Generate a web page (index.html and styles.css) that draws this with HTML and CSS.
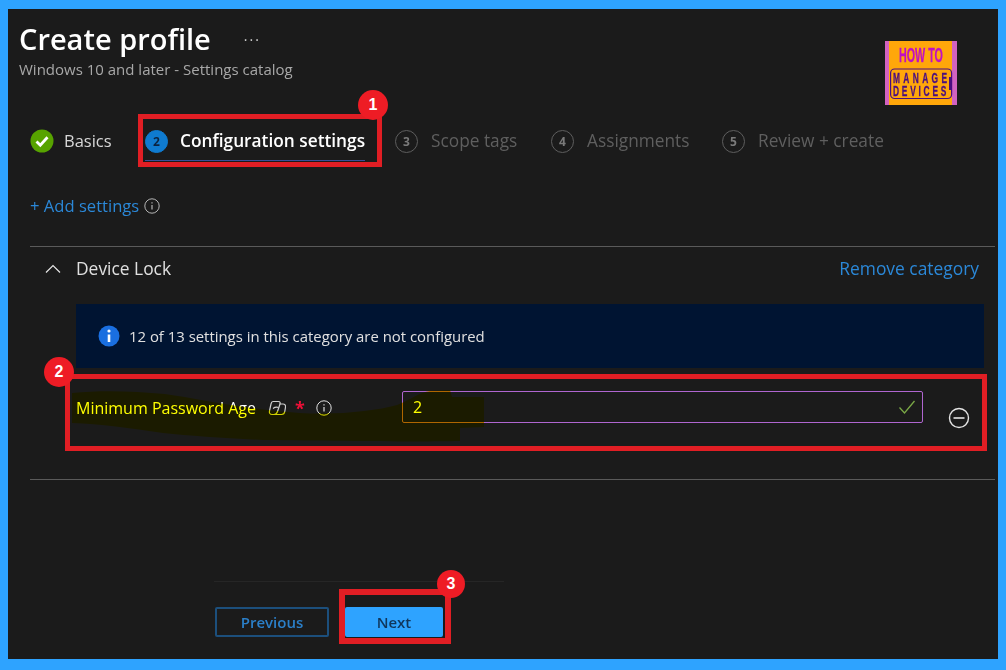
FILE: index.html
```html
<!DOCTYPE html>
<html lang="en">
<head>
<meta charset="utf-8">
<title>Create profile</title>
<link rel="stylesheet" href="styles.css">
</head>
<body>
<div class="frame">
  <header class="header">
    <div class="heading">
      <div class="title-row"><h1 class="title">Create profile</h1><span class="more">···</span></div>
      <div class="subtitle">Windows 10 and later - Settings catalog</div>
    </div>
    <svg class="logo" viewBox="0 0 72 64" width="72" height="64">
      <rect width="72" height="64" fill="#ffa70a"/>
      <rect width="4" height="64" fill="#d262c0"/>
      <rect x="67" width="5" height="64" fill="#d262c0"/>
      <text transform="translate(14 21) scale(.55 1)" class="logo-how">HOW TO</text>
      <rect x="5.600" y="28" width="61" height="29.500" rx="4" fill="none" stroke="#4a0f80" stroke-width="1.200"/>
      <text transform="translate(8 42) scale(.6 1)" class="logo-md logo-manage">MANAGE</text>
      <text transform="translate(8 55) scale(.6 1)" class="logo-md logo-devices">DEVICES</text>
      <rect x="64" y="36" width="2.500" height="13" fill="#4a0f80"/>
    </svg>
  </header>

  <nav class="tabs">
    <div class="tab tab-basics">
      <svg class="step-icon" viewBox="0 0 24 24" width="24" height="24"><circle cx="12" cy="12" r="11.500" fill="#57a300"/><path d="M6.500 12.500l3.800 3.800 7.200-8" fill="none" stroke="#fff" stroke-width="2.800"/></svg>
      <span class="tab-label">Basics</span>
    </div>
    <div class="tab tab-current">
      <span class="step step-active">2</span>
      <span class="tab-label tab-label-active">Configuration settings</span>
    </div>
    <div class="tab tab-scope">
      <span class="step">3</span>
      <span class="tab-label tab-label-off">Scope tags</span>
    </div>
    <div class="tab tab-assign">
      <span class="step">4</span>
      <span class="tab-label tab-label-off">Assignments</span>
    </div>
    <div class="tab">
      <span class="step">5</span>
      <span class="tab-label tab-label-off">Review + create</span>
    </div>
  </nav>

  <div class="add-row">
    <a class="link link-add">+ Add settings</a>
    <svg class="info" viewBox="0 0 16 16" width="16" height="16"><circle cx="8" cy="8" r="7.200" fill="none" stroke="currentColor"/><path d="M8 7v4.600M8 4.200v1.400" stroke="currentColor" stroke-width="1.200"/></svg>
  </div>

  <section class="section">
    <div class="cat-row">
      <div class="cat-left">
        <svg class="chevron" viewBox="0 0 16 16" width="16" height="16"><path d="M1 11.500l7-7 7 7" fill="none" stroke="#e6e6e6" stroke-width="1.200"/></svg>
        <span class="cat-name">Device Lock</span>
      </div>
      <a class="link">Remove category</a>
    </div>
    <div class="banner">
      <svg class="banner-icon" viewBox="0 0 22 22" width="22" height="22"><circle cx="11" cy="11" r="10.500" fill="#1a6fe0"/><path d="M11 9.500v7.500" stroke="#fff" stroke-width="2.600"/><circle cx="11" cy="6" r="1.600" fill="#fff"/></svg>
      <span>12 of 13 settings in this category are not configured</span>
    </div>
    <div class="field-row">
      <div class="field-label">
        <span class="label-text">Minimum Password Age</span>
        <svg class="copilot" viewBox="0 0 18 18" width="18" height="18"><path d="M5 2.500h5.500c1.500 0 2 1 1.500 2.500L9.500 12.500c-.5 1.500-1.500 3-3.500 3H4c-2 0-3-1.500-2.500-3.500L3 5c.3-1.500 1-2.500 2-2.500z" fill="none" stroke="#cfcfcf" stroke-width="1.200"/><path d="M11.500 5H15c1.800 0 2.800 1.500 2.500 3.200l-.7 4.300c-.3 2-1.500 3-3.300 3H6" fill="none" stroke="#cfcfcf" stroke-width="1.200"/><path d="M5 9.500c2-1.500 4-1.500 5.500-1" fill="none" stroke="#cfcfcf" stroke-width="1.200"/></svg>
        <span class="req">*</span>
        <svg class="info info-label" viewBox="0 0 16 16" width="16" height="16"><circle cx="8" cy="8" r="7.200" fill="none" stroke="currentColor"/><path d="M8 7v4.600M8 4.200v1.400" stroke="currentColor" stroke-width="1.200"/></svg>
      </div>
      <div class="input">
        <span class="input-value">2</span>
        <svg class="input-check" viewBox="0 0 18 16" width="18" height="16"><path d="M1.500 8.500l5 5.500L16.500 2" fill="none" stroke="#7aa846" stroke-width="1.300"/></svg>
      </div>
      <svg class="minus" viewBox="0 0 22 22" width="22" height="22"><circle cx="11" cy="11" r="9.500" fill="none" stroke="#e4e4e4" stroke-width="1.400"/><path d="M5.500 11h11" stroke="#e4e4e4" stroke-width="1.600"/></svg>
    </div>
  </section>

  <footer class="footer">
    <div class="footer-actions">
      <button class="btn btn-prev" type="button">Previous</button>
      <button class="btn btn-next" type="button">Next</button>
    </div>
  </footer>
</div>

<svg class="scribble" viewBox="0 0 1006 670" width="1006" height="670"><path d="M72 393C100 390 135 391 165 394C200 399 250 410 300 413C340 415 375 411 397 405C410 400 420 392 430 391L450 390L452 397L484 397L484 427L460 428L460 441C420 442 340 441 263 440C225 438 190 436 163 433C130 428 100 424 72 423Z" fill="#ffff00"/></svg>

<div class="mark mark-1"></div>
<div class="mark mark-2"></div>
<div class="mark mark-3"></div>
<span class="badge badge-1">1</span>
<span class="badge badge-2">2</span>
<span class="badge badge-3">3</span>
</body>
</html>
```
FILE: styles.css
```css
* { box-sizing: border-box; }
html, body { margin: 0; padding: 0; }
body {
  position: relative;
  width: 1006px;
  height: 670px;
  overflow: hidden;
  font-family: "Open Sans", "Noto Sans", sans-serif;
  color: #e6e6e6;
  background: #2ea3ff;
}
.frame {
  height: 670px;
  border-style: solid;
  border-color: #2ea3ff;
  border-width: 9px 8px 11px 8px;
  background: #1b1b1b;
  padding-left: 22px;
  padding-right: 3px;
}
.header {
  display: flex;
  justify-content: space-between;
  align-items: flex-start;
  height: 96px;
  margin-left: -11px;
  padding-right: 38px;
}
.heading { padding-top: 10px; }
.title-row { display: flex; align-items: center; height: 40px; }
.title {
  margin: 0;
  font-size: 29px;
  font-weight: 600;
  line-height: 40px;
  color: #fff;
}
.more {
  margin-left: 33px;
  font-size: 14px;
  letter-spacing: 2px;
  color: #cfcfcf;
}
.subtitle { font-size: 15px; line-height: 20px; color: #a8a8a8; }
.logo { margin-top: 32px; display: block; }
.logo-how { font: 700 19.500px "Liberation Sans", sans-serif; fill: #c010c4; stroke: #c010c4; stroke-width: .3px; }
.logo-md { font: 700 14px "Liberation Sans", sans-serif; fill: #4a0f80; stroke: #4a0f80; stroke-width: .3px; }
.logo-manage { letter-spacing: 5.600px; }
.logo-devices { letter-spacing: 4.600px; }

.tabs {
  display: flex;
  align-items: center;
  height: 40px;
  margin-top: 16px;
}
.tab {
  display: flex;
  align-items: center;
  gap: 13px;
  height: 40px;
}
.tab-basics { width: 115px; gap: 10px; }
.tab-current {
  width: 220px;
  position: relative;
  gap: 12px;
  margin-right: 30px;
}
.tab-current::after {
  content: "";
  position: absolute;
  left: 0; right: 0; bottom: 0;
  height: 1px;
  background: #3a4f9a;
}
.tab-scope { width: 156px; }
.tab-assign { width: 171px; }
.tab-label { font-size: 17.300px; color: #d8d8d8; white-space: nowrap; padding-bottom: 2px; }
.tab-basics .tab-label { font-size: 16.500px; }
.tab-label-active { font-weight: 600; color: #fff; }
.tab-label-off { color: #5f5f5f; }
.step-icon { display: block; }
.step {
  width: 23px;
  height: 23px;
  flex: none;
  border-radius: 50%;
  border: 1.500px solid #5e5e5e;
  display: flex;
  align-items: center;
  justify-content: center;
  font-size: 12px;
  font-weight: 700;
  color: #7a7a7a;
}
.step-active { background: #0f7bd0; border-color: #0f7bd0; color: #0b2340; }

.add-row {
  display: flex;
  align-items: center;
  gap: 5px;
  height: 20px;
  margin-top: 35px;
}
.link { font-size: 17.400px; color: #2b88d8; padding-bottom: 2px; }
.link-add { font-size: 16.600px; }
.info { color: #b5b5b5; display: block; }

.section {
  margin-top: 30px;
  height: 234px;
  border-top: 1px solid #5a5a5a;
  border-bottom: 1px solid #5a5a5a;
}
.cat-row {
  display: flex;
  justify-content: space-between;
  align-items: center;
  height: 44px;
  padding-left: 15px;
  padding-right: 16px;
}
.cat-left { display: flex; align-items: center; gap: 15px; }
.cat-name { font-size: 17.400px; color: #e0e0e0; padding-bottom: 2px; }
.banner {
  display: flex;
  align-items: center;
  gap: 9px;
  height: 64px;
  margin: 13px 11px 0 46px;
  padding-left: 22px;
  background: #001432;
  font-size: 14.900px;
  color: #e0e0e0;
}
.field-row {
  display: flex;
  align-items: flex-start;
  margin: 23px 0 0 46px;
}
.field-label {
  display: flex;
  align-items: center;
  width: 326px;
  height: 34px;
  font-size: 16px;
}
.label-text { color: #fff; }
.copilot { margin-left: 12px; }
.req { margin-left: 9px; color: #f01038; font-size: 18px; font-weight: 700; }
.info-label { margin-left: 11px; color: #e0e0e0; }
.input {
  display: flex;
  align-items: center;
  justify-content: space-between;
  width: 521px;
  height: 32px;
  padding: 0 6px 0 10px;
  border: 1px solid #b066d0;
  border-radius: 2px;
}
.input-value { font-size: 16px; color: #fff; }
.minus { margin: 16px 0 0 25px; display: block; }

.footer {
  margin-left: 184px;
  width: 290px;
  margin-top: 101px;
  border-top: 1px solid #262626;
  padding-top: 25px;
}
.footer-actions { display: flex; gap: 16px; padding-left: 1px; }
.btn {
  height: 30px;
  border-radius: 2px;
  font: 600 15px "Open Sans", sans-serif;
  padding: 0;
}
.btn-prev {
  width: 114px;
  background: transparent;
  border: 2px solid #1c4f7c;
  color: #2b7fc8;
}
.btn-next {
  width: 98px;
  background: #2ea3ff;
  border: 0;
  color: #10365c;
}

.scribble {
  position: absolute;
  left: 0; top: 0;
  mix-blend-mode: multiply;
  pointer-events: none;
}
.mark {
  position: absolute;
  border: 5px solid #e11e24;
}
.mark-1 { left: 138px; top: 114px; width: 244px; height: 53px; }
.mark-2 { left: 65px; top: 374px; width: 922px; height: 77px; }
.mark-3 { left: 339px; top: 589px; width: 112px; height: 55px; border-width: 6px; }
.badge {
  position: absolute;
  width: 30px;
  height: 30px;
  border-radius: 50%;
  background: #ee1c25;
  color: #fff;
  font: 700 16px/30px "Liberation Sans", sans-serif;
  text-align: center;
}
.badge-1 { left: 358px; top: 90px; }
.badge-2 { left: 44px; top: 357px; }
.badge-3 { left: 437px; top: 570px; width: 28px; height: 28px; line-height: 28px; }
```
